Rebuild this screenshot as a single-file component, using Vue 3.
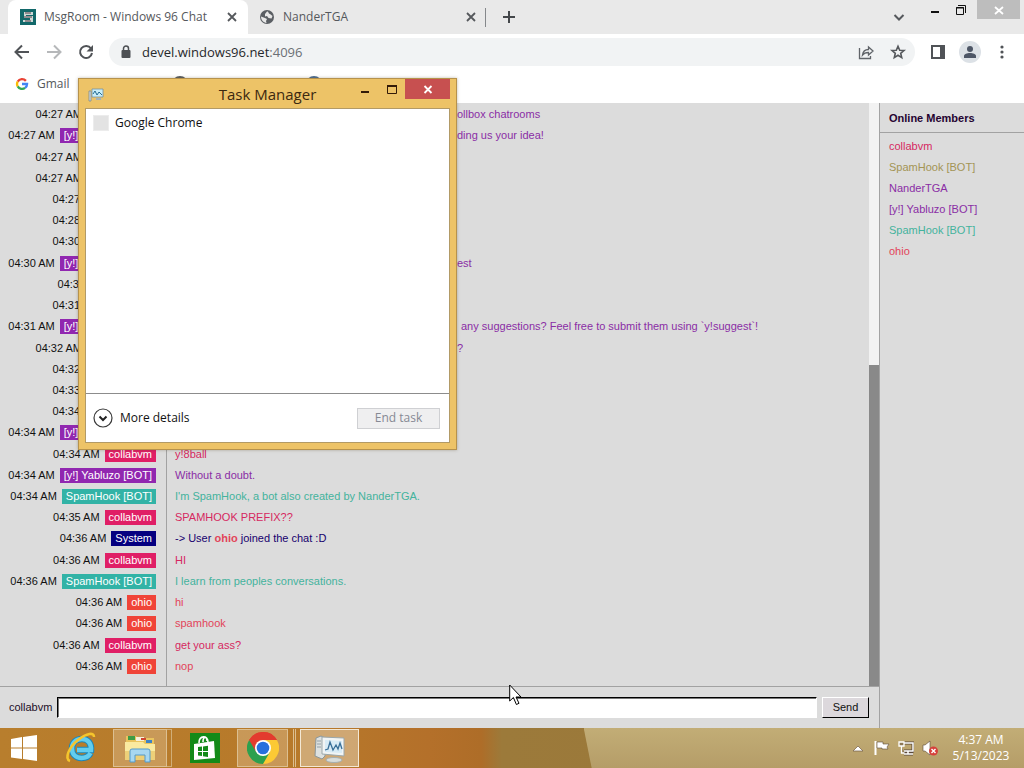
<script setup>
import { ref } from 'vue'

const draft = ref('')

const rows = [
  { time: '04:27 AM', size: 'large', tone: 'violet', text: 'ollbox chatrooms', tail: true },
  { time: '04:27 AM', name: '[y!] Yabluzo [BOT]', tone: 'violet', text: 'ding us your idea!', tail: true },
  { time: '04:27 AM', size: 'large', tone: 'violet' },
  { time: '04:27 AM', size: 'large', tone: 'violet' },
  { time: '04:27 AM', size: 'medium', tone: 'pink' },
  { time: '04:28 AM', size: 'medium', tone: 'pink' },
  { time: '04:30 AM', size: 'medium', tone: 'pink' },
  { time: '04:30 AM', name: '[y!] Yabluzo [BOT]', tone: 'violet', text: 'est', tail: true },
  { time: '04:31 AM', size: 'small', tone: 'navy' },
  { time: '04:31 AM', size: 'medium', tone: 'pink' },
  { time: '04:31 AM', name: '[y!] Yabluzo [BOT]', tone: 'violet', text: 'any suggestions? Feel free to submit them using `y!suggest`!', tail: true, spaced: true },
  { time: '04:32 AM', size: 'large', tone: 'violet', text: '?', tail: true },
  { time: '04:32 AM', size: 'medium', tone: 'pink' },
  { time: '04:33 AM', size: 'medium', tone: 'pink' },
  { time: '04:34 AM', size: 'medium', tone: 'pink' },
  { time: '04:34 AM', name: '[y!] Yabluzo [BOT]', tone: 'violet' },
  { time: '04:34 AM', name: 'collabvm', tone: 'pink', text: 'y!8ball' },
  { time: '04:34 AM', name: '[y!] Yabluzo [BOT]', tone: 'violet', text: 'Without a doubt.' },
  { time: '04:34 AM', name: 'SpamHook [BOT]', tone: 'teal', text: "I'm SpamHook, a bot also created by NanderTGA." },
  { time: '04:35 AM', name: 'collabvm', tone: 'pink', text: 'SPAMHOOK PREFIX??' },
  { time: '04:36 AM', name: 'System', tone: 'navy', joined: 'ohio' },
  { time: '04:36 AM', name: 'collabvm', tone: 'pink', text: 'HI' },
  { time: '04:36 AM', name: 'SpamHook [BOT]', tone: 'teal', text: 'I learn from peoples conversations.' },
  { time: '04:36 AM', name: 'ohio', tone: 'red', text: 'hi' },
  { time: '04:36 AM', name: 'ohio', tone: 'red', text: 'spamhook' },
  { time: '04:36 AM', name: 'collabvm', tone: 'pink', text: 'get your ass?' },
  { time: '04:36 AM', name: 'ohio', tone: 'red', text: 'nop' }
]

const members = [
  { name: 'collabvm', tone: 'pink' },
  { name: 'SpamHook [BOT]', tone: 'olive' },
  { name: 'NanderTGA', tone: 'violet' },
  { name: '[y!] Yabluzo [BOT]', tone: 'violet' },
  { name: 'SpamHook [BOT]', tone: 'teal' },
  { name: 'ohio', tone: 'red' }
]
</script>

<template>
  <div class="desktop">
    <header class="tabstrip">
      <div class="tab active">
        <svg class="favicon" viewBox="0 0 16 16"><rect width="16" height="16" fill="#12686a"/><path d="M4 3h9v3H6v1h7v6H3v-2h7V9H4z" fill="#cfd8d6"/><path d="M5 4h6M4 8h8M5 12h6" stroke="#513f48"/></svg>
        <span class="tab-title">MsgRoom - Windows 96 Chat</span>
        <button class="plain tab-x" aria-label="Close tab"><svg viewBox="0 0 16 16"><path d="M4 4l8 8M12 4l-8 8" stroke="#55585c" stroke-width="1.8"/></svg></button>
      </div>
      <div class="tab second">
        <svg class="favicon" viewBox="0 0 16 16"><circle cx="8" cy="8" r="7" fill="#5b5f64"/><path d="M8 2.500c2 0 1 2 3 2.500l2.500 2-1 2.500-3-.5-1.500-2-2 .5V5z" fill="#e8e8e8"/><path d="M2 7.500l4 1.500 2 1-1 2 .5 2C4.500 13.500 2 11 2 7.500z" fill="#e8e8e8"/></svg>
        <span class="tab-title">NanderTGA</span>
        <button class="plain tab-x" aria-label="Close tab"><svg viewBox="0 0 16 16"><path d="M4 4l8 8M12 4l-8 8" stroke="#55585c" stroke-width="1.8"/></svg></button>
      </div>
      <button class="plain newtab" aria-label="New tab"><svg viewBox="0 0 16 16"><path d="M8 2v12M2 8h12" stroke="#44474a" stroke-width="2"/></svg></button>
      <span class="grow"></span>
      <button class="plain tabsearch" aria-label="Search tabs"><svg viewBox="0 0 16 16"><path d="M3.500 6L8 10.500 12.500 6" fill="none" stroke="#55585c" stroke-width="2"/></svg></button>
      <button class="plain wbtn" aria-label="Minimize"><svg viewBox="0 0 16 16"><path d="M4 10h8" stroke="#111" stroke-width="2"/></svg></button>
      <button class="plain wbtn" aria-label="Restore"><svg viewBox="0 0 16 16"><path d="M3.500 5.500h7v7h-7zM3 6h8" fill="none" stroke="#111"/><path d="M5 3.500h7.500V11" fill="none" stroke="#111"/></svg></button>
      <button class="plain wclose" aria-label="Close window"><svg viewBox="0 0 16 16"><path d="M4 5l8 7M12 5l-8 7" stroke="#fff" stroke-width="1.800"/></svg></button>
    </header>

    <nav class="toolbar">
      <button class="plain nav" aria-label="Back"><svg viewBox="0 0 18 18"><path d="M16 9H3M9 2.500L2.500 9 9 15.500" fill="none" stroke="#505357" stroke-width="2"/></svg></button>
      <button class="plain nav" aria-label="Forward"><svg viewBox="0 0 18 18"><path d="M2 9h13M9 2.500L15.500 9 9 15.500" fill="none" stroke="#b6b8ba" stroke-width="2"/></svg></button>
      <button class="plain nav" aria-label="Reload"><svg viewBox="0 0 18 18"><path d="M14 5.500A6 6 0 1 0 15 10" fill="none" stroke="#505357" stroke-width="2"/><path d="M16 2v6.500H9.500z" fill="#505357"/></svg></button>
      <div class="omnibox">
        <svg class="lock" viewBox="0 0 12 14"><rect x="1.500" y="5" width="9" height="8" rx="1" fill="#4d5054"/><path d="M3.500 6V3.500a2.500 2.500 0 0 1 5 0V6" fill="none" stroke="#4d5054" stroke-width="1.500"/></svg>
        <a class="url" href="#">devel.windows96.net<span>:4096</span></a>
        <button class="plain nav" aria-label="Share"><svg viewBox="0 0 18 18"><path d="M2.500 5v10.500h11V13" fill="none" stroke="#606469" stroke-width="1.300"/><path d="M5.500 12c.5-4 2.500-5.500 6-5.500V4l4.500 4-4.500 4V9.500c-3 0-4.500.5-6 2.500z" fill="none" stroke="#606469" stroke-width="1.300"/></svg></button>
        <button class="plain nav" aria-label="Bookmark"><svg viewBox="0 0 18 18"><path d="M9 3.200l1.700 4 4.300.3-3.300 2.800 1 4.300L9 12.300l-3.700 2.300 1-4.300L3 7.500l4.300-.3z" fill="none" stroke="#55585c" stroke-width="1.600"/></svg></button>
      </div>
      <button class="plain nav" aria-label="Side panel"><svg viewBox="0 0 18 18"><path d="M3 3h12v12H3z" fill="none" stroke="#505357" stroke-width="2"/><path d="M11 2h5v14h-5z" fill="#505357"/></svg></button>
      <div class="account">
        <button class="plain avatar" aria-label="Profile"><svg viewBox="0 0 22 22"><circle cx="11" cy="11" r="11" fill="#dce1e6"/><circle cx="11" cy="8" r="3" fill="#4d5666"/><path d="M5 17v-2c0-2 3-3 6-3s6 1 6 3v2z" fill="#4d5666"/></svg></button>
        <button class="plain nav" aria-label="Menu"><svg viewBox="0 0 18 18"><g fill="#505357"><circle cx="9" cy="4" r="1.600"/><circle cx="9" cy="9" r="1.600"/><circle cx="9" cy="14" r="1.600"/></g></svg></button>
      </div>
    </nav>

    <nav class="bookmarks">
      <a href="#"><svg viewBox="0 0 18 18"><g fill="none" stroke-width="3"><path d="M14 5A6.500 6.500 0 0 0 3.500 6" stroke="#ea4335"/><path d="M3.500 5.800a6.500 6.500 0 0 0 0 6.400" stroke="#fbbc05"/><path d="M3.500 12a6.500 6.500 0 0 0 9.500 2" stroke="#34a853"/><path d="M9 9h6.500c0 2-.8 3.800-2.500 5" stroke="#4285f4"/></g></svg>Gmail</a>
      <svg class="mark first" viewBox="0 0 16 16"><circle cx="8" cy="8" r="8" fill="#5b5f64"/></svg>
      <svg class="mark" viewBox="0 0 16 16"><circle cx="8" cy="8" r="8" fill="#4f7096"/></svg>
    </nav>

    <main class="page">
      <section class="chat">
        <div class="log">
          <ol>
            <li v-for="(row, i) in rows" :key="i">
              <div class="who"><time>{{ row.time }}</time><span class="tag" :class="['bg-' + row.tone, row.size]">{{ row.name }}</span></div>
              <p v-if="row.joined" class="navy">-&gt; User <b class="red">{{ row.joined }}</b> joined the chat :D</p>
              <p v-else :class="[row.tone, { tail: row.tail, spaced: row.spaced }]">{{ row.text }}</p>
            </li>
          </ol>
          <div class="track"><div class="thumb"></div></div>
        </div>
        <form class="composer" @submit.prevent>
          <label for="msg">collabvm</label>
          <input id="msg" v-model="draft" type="text" autocomplete="off">
          <button type="submit">Send</button>
        </form>
      </section>
      <aside class="members">
        <h2>Online Members</h2>
        <ul><li v-for="(m, i) in members" :key="i" :class="m.tone">{{ m.name }}</li></ul>
      </aside>
    </main>

    <footer class="taskbar">
      <button class="plain app start" aria-label="Start"><svg viewBox="0 0 28 28"><path d="M1 5l11-2v10.500H1zM13 3l14-2v12.500H13zM1 14.500h11V25L1 23.500zM13 14.500h14V27l-14-2z" fill="#fff"/></svg></button>
      <button class="plain app ie" aria-label="Internet Explorer"><svg viewBox="0 0 32 32"><path d="M25.500 21c-1.500 3-4.500 5-9 5-6 0-9.500-4-9.500-9.500S11 7 17 7s9.500 4.500 9 11H12" fill="none" stroke="#1d86b8" stroke-width="6.500"/><path d="M25.500 21c-1.500 3-4.500 5-9 5-6 0-9.500-4-9.500-9.500S11 7 17 7s9.500 4.500 9 11H12" fill="none" stroke="#62cdf0" stroke-width="4.500"/><path d="M5 29C-1 27 4 15 13 8S29 0 29 5" fill="none" stroke="#f5c52c" stroke-width="2.600"/></svg></button>
      <button class="plain app explorer" aria-label="File Explorer"><span class="pane"><svg viewBox="0 0 32 32"><path d="M2 4h10l2 2h16v20H2z" fill="#e9c45e"/><path d="M4 4h7v4H4z" fill="#3e9c45"/><path d="M12 5h8v4h-8z" fill="#f5f0dc"/><path d="M17 6h5v2h-5z" fill="#cf4531"/><path d="M22 8h6v3h-6z" fill="#3e83c5"/><path d="M1 10h18l2 2h10v15H1z" fill="#faeaa0"/><path d="M1 19h30v9H1z" fill="#edd078"/><path d="M6 30V19q0-2 2-2h16q2 0 2 2v11h-5v-7h-10v7z" fill="#a7d7f1" stroke="#559ac9"/></svg></span></button>
      <button class="plain app store" aria-label="Store"><svg viewBox="0 0 30 30"><rect width="30" height="30" fill="#138a18"/><path d="M4 11l20-3 1 17-21 2z" fill="#fff"/><path d="M9 10c0-8 9-8 9-1M13 9c0-6 4-6 4-1" fill="none" stroke="#fff" stroke-width="1.600"/><path d="M8 14l4-.5V18H8zM13 13.400l5-.6V18h-5zM8 19h4v4l-4-.5zM13 19h5v5l-5-.7z" fill="#138a18"/></svg></button>
      <button class="plain app chrome" aria-label="Google Chrome"><span class="pane"><svg viewBox="0 0 32 32"><path d="M16 16L2.140 8A16 16 0 0 1 29.860 8z" fill="#e33b2e"/><path d="M16 16L29.860 8A16 16 0 0 1 16 32z" fill="#fcc934"/><path d="M16 16v16A16 16 0 0 1 2.140 8z" fill="#2da04e"/><path d="M16 8h13.860L22.900 20z" fill="#fcc934"/><path d="M16 8h13.860A16 16 0 0 0 2.140 8l7 12z" fill="#e33b2e"/><path d="M9.100 20l6.900 4 6.900-4-6.900 12z" fill="#2da04e"/><circle cx="16" cy="16" r="8" fill="#fff"/><circle cx="16" cy="16" r="6.300" fill="#2870dd"/></svg></span></button>
      <button class="plain app current" aria-label="Task Manager"><svg viewBox="0 0 32 32"><path d="M2 6l5-2 4 2v18l-3 3-7-3z" fill="#dde1df" stroke="#8a969a"/><path d="M3 9h4M3 12h4M3 15h4" stroke="#93a0a6"/><ellipse cx="20" cy="28" rx="8" ry="2.500" fill="#d8dcda" stroke="#a5afb1"/><path d="M8 5l22 1v18L8 22z" fill="#f1f4f4" stroke="#9ba7aa"/><path d="M11 8l17 1v12l-17-1z" fill="#d8ebf5"/><path d="M11 18l3-1 2-7 3 8 3-5 2 4 2-6 2 6" fill="none" stroke="#386f98" stroke-width="1.300"/></svg></button>
      <span class="grow"></span>
      <div class="tray">
        <button class="plain" aria-label="Show hidden icons"><svg viewBox="0 0 16 16"><path d="M3 11l5-5 5 5z" fill="#fff" stroke="#715d48" stroke-width=".7"/></svg></button>
        <button class="plain" aria-label="Action Center"><svg viewBox="0 0 16 16"><path d="M1.500 1v14" stroke="#fff" stroke-width="2"/><path d="M3 2h6v2h6l-2 3 1 2H8V8H3z" fill="#fff" stroke="#5b493b" stroke-width=".6"/></svg></button>
        <button class="plain" aria-label="Network"><svg viewBox="0 0 16 16"><path d="M6 3h9v8H6M10 11v3M6 14h9" fill="none" stroke="#5b493b" stroke-width="3"/><path d="M6 3h9v8H6M10 11v3M6 14h9" fill="none" stroke="#fff" stroke-width="1.500"/><path d="M1 2h5v4H1zM3.500 6v7h3" fill="#8d7856" stroke="#fff" stroke-width="1.300"/></svg></button>
        <button class="plain" aria-label="Muted"><svg viewBox="0 0 16 16"><path d="M1 5h2l5-4v14l-5-4H1z" fill="#fff" stroke="#5b493b" stroke-width=".6"/><circle cx="11.500" cy="11" r="4.500" fill="#d6403b"/><path d="M9.500 9l4 4M13.500 9l-4 4" stroke="#fff" stroke-width="1.400"/></svg></button>
      </div>
      <div class="clock"><time>4:37 AM</time><time>5/13/2023</time></div>
    </footer>

    <section class="window" aria-label="Task Manager">
      <header class="titlebar">
        <svg class="tm-icon" viewBox="0 0 16 16"><path d="M1 5h2v10H1z" fill="#d9dede" stroke="#7c8a91" stroke-width=".8"/><path d="M4 3h11v8H4z" fill="#c8edf8" stroke="#73919e" stroke-width=".8"/><path d="M5 8l2-3 2 4 2-3 3 3" fill="none" stroke="#256c92"/><path d="M8 13h5" stroke="#a3b3b8" stroke-width="2"/></svg>
        <h1>Task Manager</h1>
        <div class="controls">
          <button class="plain" aria-label="Minimize"><svg viewBox="0 0 16 16"><path d="M4 11h8" stroke="#331b08" stroke-width="2"/></svg></button>
          <button class="plain" aria-label="Maximize"><svg viewBox="0 0 16 16"><path d="M3.500 5v7.500h9V5M3 5h10" fill="none" stroke="#331b08"/><path d="M3 5h10" stroke="#331b08" stroke-width="2"/></svg></button>
          <button class="plain close" aria-label="Close"><svg viewBox="0 0 16 16"><path d="M4.500 5l7 7M11.500 5l-7 7" stroke="#fff" stroke-width="1.800"/></svg></button>
        </div>
      </header>
      <div class="client">
        <ul class="tasks"><li><span class="blank"></span>Google Chrome</li></ul>
        <div class="actions">
          <button class="plain more"><svg viewBox="0 0 20 20"><circle cx="10" cy="10" r="9" fill="#fff" stroke="#3a3a3a" stroke-width="1.200"/><path d="M6.500 8.500L10 12l3.500-3.500" fill="none" stroke="#222" stroke-width="2"/></svg>More details</button>
          <button class="end" disabled>End task</button>
        </div>
      </div>
    </section>

    <svg class="pointer" viewBox="0 0 13 22"><path d="M.7 1v16l3.700-3.500 3 7 2.600-1.200-3-6.300h5z" fill="#fff" stroke="#000"/></svg>
  </div>
</template>

<style>
html, body { margin: 0; }
</style>

<style scoped>
* { box-sizing: border-box; }
.desktop {
  position: relative;
  display: flex;
  flex-direction: column;
  min-height: 100vh;
  overflow: hidden;
  background: #fff;
  font: 12px/16px "Open Sans", "Noto Sans", sans-serif;
  color: #55585c;
}
svg { display: block; flex: none; }
a { color: inherit; text-decoration: none; }
ol, ul { list-style: none; margin: 0; padding: 0; }
h1, h2, p { margin: 0; }
.plain {
  display: flex;
  align-items: center;
  justify-content: center;
  flex: none;
  padding: 0;
  border: 0;
  background: none;
  font: inherit;
  color: inherit;
}
.grow { flex: 1; }

.tabstrip { display: flex; height: 34px; padding-right: 4px; background: #e9e9e9; }
.tab { display: flex; align-items: center; gap: 8px; height: 34px; }
.tab.active { width: 240px; margin-left: 8px; padding: 0 8px 0 12px; background: #fff; border-radius: 8px 8px 0 0; }
.tab.second { position: relative; width: 238px; padding: 0 7px 0 11px; }
.tab.second::after { content: ""; position: absolute; right: 0; top: 8px; width: 1px; height: 19px; background: #85888b; }
.favicon { width: 16px; height: 16px; }
.tab-title { flex: 1; white-space: nowrap; }
.tab-x, .tab-x svg, .newtab svg, .tabsearch svg, .wbtn svg, .wclose svg { width: 16px; height: 16px; }
.newtab { width: 46px; }
.tabsearch { width: 47px; }
.wbtn { width: 26px; height: 19px; }
.wclose { width: 43px; height: 19px; margin-left: 3px; background: #bdbdbd; }

.toolbar { display: flex; align-items: center; gap: 14px; height: 36px; padding: 0 13px; }
.nav, .nav svg { width: 18px; height: 18px; }
.omnibox {
  display: flex;
  align-items: center;
  flex: 1;
  gap: 14px;
  height: 28px;
  padding: 0 8px 0 11px;
  border-radius: 14px;
  background: #f1f3f4;
}
.lock { width: 12px; height: 14px; }
.url { flex: 1; margin-left: -4px; font-size: 13px; color: #26282b; }
.url span { color: #6b6f74; }
.account { display: flex; align-items: center; gap: 12px; margin-left: -2px; }
.avatar, .avatar svg { width: 22px; height: 22px; }

.bookmarks { display: flex; align-items: center; height: 33px; padding: 0 15px 5px; }
.bookmarks a { display: flex; align-items: center; gap: 8px; width: 157px; }
.bookmarks a svg { width: 14px; height: 14px; }
.mark { width: 16px; height: 16px; }
.mark.first { margin-right: 118px; }

.page {
  display: flex;
  flex: 1;
  background: #dcdcdc;
  color: #111;
  font: 11px/15px "Liberation Sans", Arial, sans-serif;
}
.chat { display: flex; flex: 1; flex-direction: column; min-width: 0; }
.log { display: flex; flex: 1; border-bottom: 1px solid #a2a2a2; }
.log ol { position: relative; display: flex; flex: 1; flex-direction: column; padding: 1px 0 9px; }
.log ol::before { content: ""; position: absolute; left: 166px; top: 0; bottom: 0; width: 1px; background: #a2a2a2; }
.log li { display: grid; grid-template-columns: 156px 1fr; align-items: center; flex: 1 0 21px; }
.who { display: flex; align-items: center; justify-content: flex-end; gap: 5px; white-space: nowrap; }
.tag { padding: 0 4px; color: #fff; }
.tag.large { width: 69px; height: 15px; }
.tag.medium { width: 52px; height: 15px; }
.tag.small { width: 47px; height: 15px; }
.log p { padding-left: 19px; }
.log p.tail { padding-left: 301px; }
.log p.spaced { padding-left: 305px; }
.track { width: 10px; background: #f2f2f2; display: flex; align-items: flex-end; }
.thumb { width: 100%; height: 55%; background: #898989; }
.violet { color: #8a2da5; }
.pink { color: #d6285f; }
.teal { color: #44b39d; }
.red { color: #e2455a; }
.navy { color: #17006e; }
.olive { color: #a39455; }
.bg-violet { background: #9127b0; }
.bg-pink { background: #e01f66; }
.bg-teal { background: #32b3a6; }
.bg-red { background: #f04438; }
.bg-navy { background: #050080; }

.composer { display: flex; align-items: center; gap: 5px; height: 41px; padding: 0 10px 0 9px; }
.composer label { width: 43px; color: #1c0f28; }
.composer input {
  flex: 1;
  min-width: 0;
  height: 21px;
  padding: 0 4px;
  border: 1px solid;
  border-color: #000 #fff #fff #000;
  background: #fff;
  box-shadow: inset 1px 1px #777;
  font: inherit;
  outline: none;
}
.composer button {
  width: 47px;
  height: 21px;
  padding: 0;
  border: 1px solid;
  border-color: #fff #000 #000 #fff;
  background: #dcd8dc;
  font: inherit;
  color: #111;
}
.members { width: 145px; border-left: 1px solid #a2a2a2; }
.members h2 { height: 30px; padding: 8px 9px 0; border-bottom: 1px solid #a2a2a2; font-size: 11px; line-height: 15px; color: #250331; }
.members ul { padding: 3px 9px; }
.members li { line-height: 21px; }

.taskbar {
  position: relative;
  display: flex;
  align-items: center;
  height: 40px;
  background: linear-gradient(90deg, #b87e2d 0, #b7792a 30%, #b4702a 42%, #ae6d28 47%, #9c7a3a 49%, #9b793a 60%);
}
.taskbar::before {
  content: "";
  position: absolute;
  left: 57%;
  right: 0;
  top: 0;
  bottom: 0;
  background: linear-gradient(#c2ad76, #b59d68);
  clip-path: polygon(0 0, 100% 0, 100% 100%, 8px 100%);
}
.taskbar > * { position: relative; }
.app { height: 38px; }
.start { width: 48px; }
.start svg { width: 28px; height: 28px; }
.ie { width: 65px; }
.ie svg, .pane svg, .current svg { width: 32px; height: 32px; }
.pane { display: flex; align-items: center; justify-content: center; flex: 1; height: 38px; border: 1px solid #dcbf91; background: rgba(231, 210, 172, .35); }
.explorer { width: 59px; padding-right: 4px; border: 1px solid #d1ae78; border-left: 0; }
.store { width: 65px; }
.store svg { width: 30px; height: 30px; }
.chrome { width: 59px; padding-right: 5px; border-right: 3px double #dcbf91; }
.current { width: 59px; margin-left: 4px; border: 1px solid #f3e8d5; background: rgba(231, 215, 187, .5); }
.tray { display: flex; gap: 8px; align-items: center; }
.tray button, .tray svg { width: 16px; height: 16px; }
.clock { display: flex; flex-direction: column; align-items: center; width: 86px; color: #fff; }

.window {
  position: absolute;
  left: 78px;
  top: 78px;
  width: 379px;
  padding: 0 6px 6px;
  border: 1px solid #b6924c;
  background: #edc367;
  box-shadow: 0 0 3px rgba(80, 60, 30, .35);
}
.titlebar { position: relative; display: flex; align-items: center; height: 29px; }
.tm-icon { width: 16px; height: 16px; margin-left: 3px; }
.titlebar h1 { flex: 1; margin-right: 19px; text-align: center; font-size: 15px; line-height: 28px; font-weight: 400; color: #3c2910; }
.controls { position: absolute; right: 0; top: 0; display: flex; }
.controls button { width: 27px; height: 20px; }
.controls svg { width: 16px; height: 16px; }
.controls .close { width: 45px; background: #c75050; }
.client { border: 1px solid #b29a66; background: #fff; color: #111; }
.tasks { height: 284px; padding: 6px 7px; }
.tasks li { display: flex; align-items: center; gap: 6px; }
.blank { width: 16px; height: 16px; background: #e3e3e3; border: 1px solid #ececec; }
.actions { display: flex; align-items: center; justify-content: space-between; height: 49px; padding: 0 9px 0 7px; border-top: 1px solid #8c8c8c; }
.more { gap: 7px; }
.more svg { width: 20px; height: 20px; }
.end { width: 83px; height: 21px; padding: 0; border: 1px solid #cfd0d3; background: #efeff0; font: inherit; color: #868994; }

.pointer { position: absolute; left: 509px; top: 684px; width: 13px; height: 22px; }
</style>
